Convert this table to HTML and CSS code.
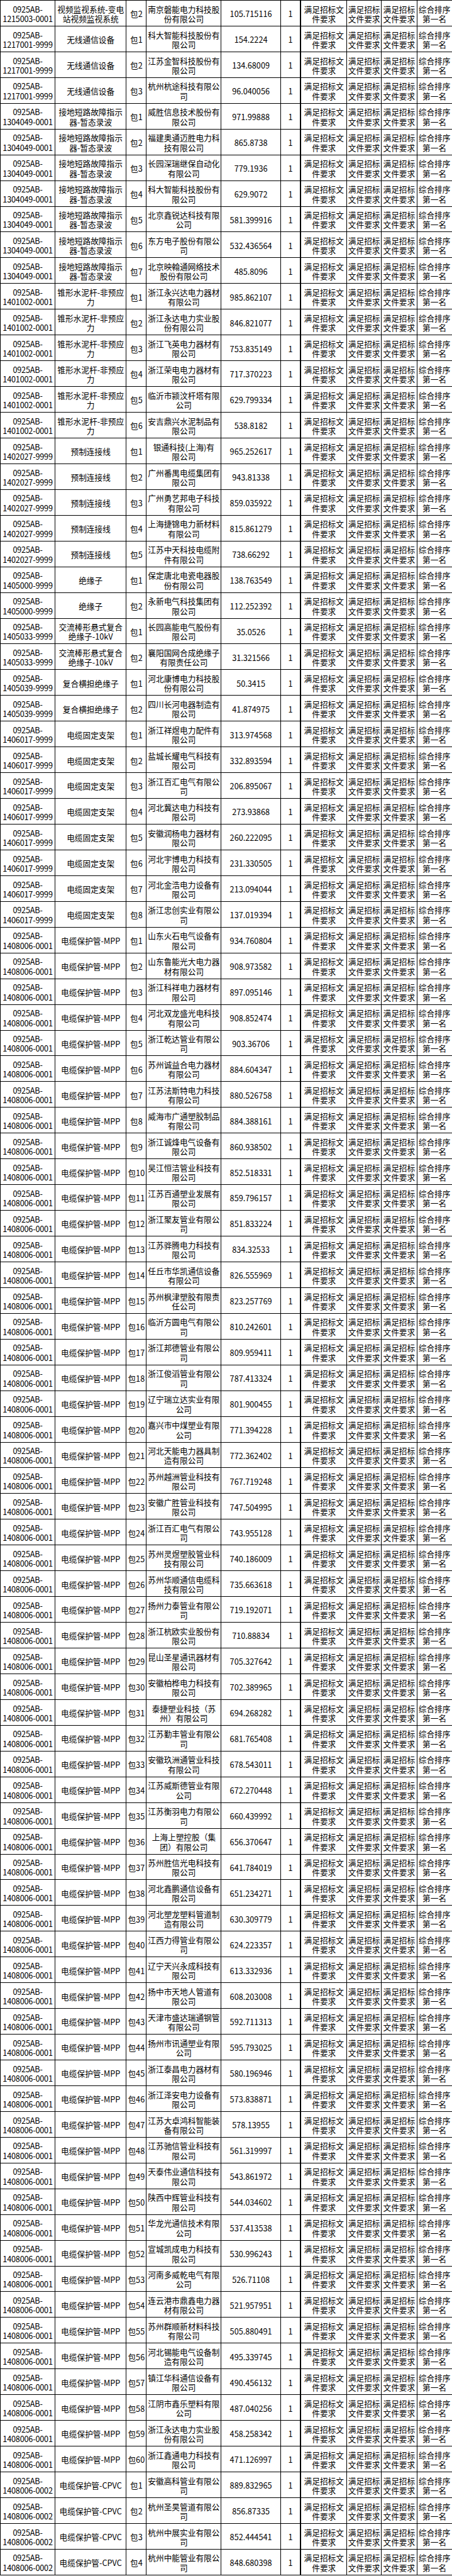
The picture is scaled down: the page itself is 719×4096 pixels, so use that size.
FILE: index.html
```html
<!DOCTYPE html>
<html lang="zh">
<head>
<meta charset="utf-8">
<title>中标候选人</title>
<link rel="stylesheet" href="styles.css">
</head>
<body>
<table class="grid">
<colgroup>
<col class="c-id"><col class="c-name"><col class="c-pkg"><col class="c-co"><col class="c-price"><col class="c-n"><col class="c-r1"><col class="c-r2"><col class="c-r3"><col class="c-rank">
</colgroup>
<tbody>
<tr><td>0925AB-<br>1215003-0001</td><td>视频监视系统-变电<br>站视频监视系统</td><td>包2</td><td>南京磐能电力科技股<br>份有限公司</td><td>105.715116</td><td>1</td><td>满足招标文<br>件要求</td><td>满足招标<br>文件要求</td><td>满足招标<br>文件要求</td><td>综合排序<br>第一名</td></tr>
<tr><td>0925AB-<br>1217001-9999</td><td>无线通信设备</td><td>包1</td><td>科大智能科技股份有<br>限公司</td><td>154.2224</td><td>1</td><td>满足招标文<br>件要求</td><td>满足招标<br>文件要求</td><td>满足招标<br>文件要求</td><td>综合排序<br>第一名</td></tr>
<tr><td>0925AB-<br>1217001-9999</td><td>无线通信设备</td><td>包2</td><td>江苏金智科技股份有<br>限公司</td><td>134.68009</td><td>1</td><td>满足招标文<br>件要求</td><td>满足招标<br>文件要求</td><td>满足招标<br>文件要求</td><td>综合排序<br>第一名</td></tr>
<tr><td>0925AB-<br>1217001-9999</td><td>无线通信设备</td><td>包3</td><td>杭州杭途科技有限公<br>司</td><td>96.040056</td><td>1</td><td>满足招标文<br>件要求</td><td>满足招标<br>文件要求</td><td>满足招标<br>文件要求</td><td>综合排序<br>第一名</td></tr>
<tr><td>0925AB-<br>1304049-0001</td><td>接地短路故障指示<br>器-暂态录波</td><td>包1</td><td>威胜信息技术股份有<br>限公司</td><td>971.99888</td><td>1</td><td>满足招标文<br>件要求</td><td>满足招标<br>文件要求</td><td>满足招标<br>文件要求</td><td>综合排序<br>第一名</td></tr>
<tr><td>0925AB-<br>1304049-0001</td><td>接地短路故障指示<br>器-暂态录波</td><td>包2</td><td>福建奥通迈胜电力科<br>技有限公司</td><td>865.8738</td><td>1</td><td>满足招标文<br>件要求</td><td>满足招标<br>文件要求</td><td>满足招标<br>文件要求</td><td>综合排序<br>第一名</td></tr>
<tr><td>0925AB-<br>1304049-0001</td><td>接地短路故障指示<br>器-暂态录波</td><td>包3</td><td>长园深瑞继保自动化<br>有限公司</td><td>779.1936</td><td>1</td><td>满足招标文<br>件要求</td><td>满足招标<br>文件要求</td><td>满足招标<br>文件要求</td><td>综合排序<br>第一名</td></tr>
<tr><td>0925AB-<br>1304049-0001</td><td>接地短路故障指示<br>器-暂态录波</td><td>包4</td><td>科大智能科技股份有<br>限公司</td><td>629.9072</td><td>1</td><td>满足招标文<br>件要求</td><td>满足招标<br>文件要求</td><td>满足招标<br>文件要求</td><td>综合排序<br>第一名</td></tr>
<tr><td>0925AB-<br>1304049-0001</td><td>接地短路故障指示<br>器-暂态录波</td><td>包5</td><td>北京鑫锐达科技有限<br>公司</td><td>581.399916</td><td>1</td><td>满足招标文<br>件要求</td><td>满足招标<br>文件要求</td><td>满足招标<br>文件要求</td><td>综合排序<br>第一名</td></tr>
<tr><td>0925AB-<br>1304049-0001</td><td>接地短路故障指示<br>器-暂态录波</td><td>包6</td><td>东方电子股份有限公<br>司</td><td>532.436564</td><td>1</td><td>满足招标文<br>件要求</td><td>满足招标<br>文件要求</td><td>满足招标<br>文件要求</td><td>综合排序<br>第一名</td></tr>
<tr><td>0925AB-<br>1304049-0001</td><td>接地短路故障指示<br>器-暂态录波</td><td>包7</td><td>北京映翰通网络技术<br>股份有限公司</td><td>485.8096</td><td>1</td><td>满足招标文<br>件要求</td><td>满足招标<br>文件要求</td><td>满足招标<br>文件要求</td><td>综合排序<br>第一名</td></tr>
<tr><td>0925AB-<br>1401002-0001</td><td>锥形水泥杆-非预应<br>力</td><td>包1</td><td>浙江永兴达电力器材<br>有限公司</td><td>985.862107</td><td>1</td><td>满足招标文<br>件要求</td><td>满足招标<br>文件要求</td><td>满足招标<br>文件要求</td><td>综合排序<br>第一名</td></tr>
<tr><td>0925AB-<br>1401002-0001</td><td>锥形水泥杆-非预应<br>力</td><td>包2</td><td>浙江永达电力实业股<br>份有限公司</td><td>846.821077</td><td>1</td><td>满足招标文<br>件要求</td><td>满足招标<br>文件要求</td><td>满足招标<br>文件要求</td><td>综合排序<br>第一名</td></tr>
<tr><td>0925AB-<br>1401002-0001</td><td>锥形水泥杆-非预应<br>力</td><td>包3</td><td>浙江飞英电力器材有<br>限公司</td><td>753.835149</td><td>1</td><td>满足招标文<br>件要求</td><td>满足招标<br>文件要求</td><td>满足招标<br>文件要求</td><td>综合排序<br>第一名</td></tr>
<tr><td>0925AB-<br>1401002-0001</td><td>锥形水泥杆-非预应<br>力</td><td>包4</td><td>浙江荣电电力器材有<br>限公司</td><td>717.370223</td><td>1</td><td>满足招标文<br>件要求</td><td>满足招标<br>文件要求</td><td>满足招标<br>文件要求</td><td>综合排序<br>第一名</td></tr>
<tr><td>0925AB-<br>1401002-0001</td><td>锥形水泥杆-非预应<br>力</td><td>包5</td><td>临沂市颍汶杆塔有限<br>公司</td><td>629.799334</td><td>1</td><td>满足招标文<br>件要求</td><td>满足招标<br>文件要求</td><td>满足招标<br>文件要求</td><td>综合排序<br>第一名</td></tr>
<tr><td>0925AB-<br>1401002-0001</td><td>锥形水泥杆-非预应<br>力</td><td>包6</td><td>安吉鼎兴水泥制品有<br>限公司</td><td>538.8182</td><td>1</td><td>满足招标文<br>件要求</td><td>满足招标<br>文件要求</td><td>满足招标<br>文件要求</td><td>综合排序<br>第一名</td></tr>
<tr><td>0925AB-<br>1402027-9999</td><td>预制连接线</td><td>包1</td><td>银通科技(上海)有<br>限公司</td><td>965.252617</td><td>1</td><td>满足招标文<br>件要求</td><td>满足招标<br>文件要求</td><td>满足招标<br>文件要求</td><td>综合排序<br>第一名</td></tr>
<tr><td>0925AB-<br>1402027-9999</td><td>预制连接线</td><td>包2</td><td>广州番禺电缆集团有<br>限公司</td><td>943.81338</td><td>1</td><td>满足招标文<br>件要求</td><td>满足招标<br>文件要求</td><td>满足招标<br>文件要求</td><td>综合排序<br>第一名</td></tr>
<tr><td>0925AB-<br>1402027-9999</td><td>预制连接线</td><td>包3</td><td>广州勇艺邦电子科技<br>有限公司</td><td>859.035922</td><td>1</td><td>满足招标文<br>件要求</td><td>满足招标<br>文件要求</td><td>满足招标<br>文件要求</td><td>综合排序<br>第一名</td></tr>
<tr><td>0925AB-<br>1402027-9999</td><td>预制连接线</td><td>包4</td><td>上海捷锦电力新材料<br>有限公司</td><td>815.861279</td><td>1</td><td>满足招标文<br>件要求</td><td>满足招标<br>文件要求</td><td>满足招标<br>文件要求</td><td>综合排序<br>第一名</td></tr>
<tr><td>0925AB-<br>1402027-9999</td><td>预制连接线</td><td>包5</td><td>江苏中天科技电缆附<br>件有限公司</td><td>738.66292</td><td>1</td><td>满足招标文<br>件要求</td><td>满足招标<br>文件要求</td><td>满足招标<br>文件要求</td><td>综合排序<br>第一名</td></tr>
<tr><td>0925AB-<br>1405000-9999</td><td>绝缘子</td><td>包1</td><td>保定唐北电瓷电器股<br>份有限公司</td><td>138.763549</td><td>1</td><td>满足招标文<br>件要求</td><td>满足招标<br>文件要求</td><td>满足招标<br>文件要求</td><td>综合排序<br>第一名</td></tr>
<tr><td>0925AB-<br>1405000-9999</td><td>绝缘子</td><td>包2</td><td>永新电气科技集团有<br>限公司</td><td>112.252392</td><td>1</td><td>满足招标文<br>件要求</td><td>满足招标<br>文件要求</td><td>满足招标<br>文件要求</td><td>综合排序<br>第一名</td></tr>
<tr><td>0925AB-<br>1405033-9999</td><td>交流棒形悬式复合<br>绝缘子-10kV</td><td>包1</td><td>长园高能电气股份有<br>限公司</td><td>35.0526</td><td>1</td><td>满足招标文<br>件要求</td><td>满足招标<br>文件要求</td><td>满足招标<br>文件要求</td><td>综合排序<br>第一名</td></tr>
<tr><td>0925AB-<br>1405033-9999</td><td>交流棒形悬式复合<br>绝缘子-10kV</td><td>包2</td><td>襄阳国网合成绝缘子<br>有限责任公司</td><td>31.321566</td><td>1</td><td>满足招标文<br>件要求</td><td>满足招标<br>文件要求</td><td>满足招标<br>文件要求</td><td>综合排序<br>第一名</td></tr>
<tr><td>0925AB-<br>1405039-9999</td><td>复合横担绝缘子</td><td>包1</td><td>河北康博电力科技股<br>份有限公司</td><td>50.3415</td><td>1</td><td>满足招标文<br>件要求</td><td>满足招标<br>文件要求</td><td>满足招标<br>文件要求</td><td>综合排序<br>第一名</td></tr>
<tr><td>0925AB-<br>1405039-9999</td><td>复合横担绝缘子</td><td>包2</td><td>四川长河电器制造有<br>限公司</td><td>41.874975</td><td>1</td><td>满足招标文<br>件要求</td><td>满足招标<br>文件要求</td><td>满足招标<br>文件要求</td><td>综合排序<br>第一名</td></tr>
<tr><td>0925AB-<br>1406017-9999</td><td>电缆固定支架</td><td>包1</td><td>浙江祥煜电力配件有<br>限公司</td><td>313.974568</td><td>1</td><td>满足招标文<br>件要求</td><td>满足招标<br>文件要求</td><td>满足招标<br>文件要求</td><td>综合排序<br>第一名</td></tr>
<tr><td>0925AB-<br>1406017-9999</td><td>电缆固定支架</td><td>包2</td><td>盐城长耀电气科技有<br>限公司</td><td>332.893594</td><td>1</td><td>满足招标文<br>件要求</td><td>满足招标<br>文件要求</td><td>满足招标<br>文件要求</td><td>综合排序<br>第一名</td></tr>
<tr><td>0925AB-<br>1406017-9999</td><td>电缆固定支架</td><td>包3</td><td>浙江百汇电气有限公<br>司</td><td>206.895067</td><td>1</td><td>满足招标文<br>件要求</td><td>满足招标<br>文件要求</td><td>满足招标<br>文件要求</td><td>综合排序<br>第一名</td></tr>
<tr><td>0925AB-<br>1406017-9999</td><td>电缆固定支架</td><td>包4</td><td>河北冀达电力科技有<br>限公司</td><td>273.93868</td><td>1</td><td>满足招标文<br>件要求</td><td>满足招标<br>文件要求</td><td>满足招标<br>文件要求</td><td>综合排序<br>第一名</td></tr>
<tr><td>0925AB-<br>1406017-9999</td><td>电缆固定支架</td><td>包5</td><td>安徽润杨电力器材有<br>限公司</td><td>260.222095</td><td>1</td><td>满足招标文<br>件要求</td><td>满足招标<br>文件要求</td><td>满足招标<br>文件要求</td><td>综合排序<br>第一名</td></tr>
<tr><td>0925AB-<br>1406017-9999</td><td>电缆固定支架</td><td>包6</td><td>河北宇博电力科技有<br>限公司</td><td>231.330505</td><td>1</td><td>满足招标文<br>件要求</td><td>满足招标<br>文件要求</td><td>满足招标<br>文件要求</td><td>综合排序<br>第一名</td></tr>
<tr><td>0925AB-<br>1406017-9999</td><td>电缆固定支架</td><td>包7</td><td>河北金浩电力设备有<br>限公司</td><td>213.094044</td><td>1</td><td>满足招标文<br>件要求</td><td>满足招标<br>文件要求</td><td>满足招标<br>文件要求</td><td>综合排序<br>第一名</td></tr>
<tr><td>0925AB-<br>1406017-9999</td><td>电缆固定支架</td><td>包8</td><td>浙江忠创实业有限公<br>司</td><td>137.019394</td><td>1</td><td>满足招标文<br>件要求</td><td>满足招标<br>文件要求</td><td>满足招标<br>文件要求</td><td>综合排序<br>第一名</td></tr>
<tr><td>0925AB-<br>1408006-0001</td><td>电缆保护管-MPP</td><td>包1</td><td>山东火石电气设备有<br>限公司</td><td>934.760804</td><td>1</td><td>满足招标文<br>件要求</td><td>满足招标<br>文件要求</td><td>满足招标<br>文件要求</td><td>综合排序<br>第一名</td></tr>
<tr><td>0925AB-<br>1408006-0001</td><td>电缆保护管-MPP</td><td>包2</td><td>山东鲁能光大电力器<br>材有限公司</td><td>908.973582</td><td>1</td><td>满足招标文<br>件要求</td><td>满足招标<br>文件要求</td><td>满足招标<br>文件要求</td><td>综合排序<br>第一名</td></tr>
<tr><td>0925AB-<br>1408006-0001</td><td>电缆保护管-MPP</td><td>包3</td><td>浙江科祥电力器材有<br>限公司</td><td>897.095146</td><td>1</td><td>满足招标文<br>件要求</td><td>满足招标<br>文件要求</td><td>满足招标<br>文件要求</td><td>综合排序<br>第一名</td></tr>
<tr><td>0925AB-<br>1408006-0001</td><td>电缆保护管-MPP</td><td>包4</td><td>河北双龙盛光电科技<br>有限公司</td><td>908.852474</td><td>1</td><td>满足招标文<br>件要求</td><td>满足招标<br>文件要求</td><td>满足招标<br>文件要求</td><td>综合排序<br>第一名</td></tr>
<tr><td>0925AB-<br>1408006-0001</td><td>电缆保护管-MPP</td><td>包5</td><td>浙江乾达管业有限公<br>司</td><td>903.36706</td><td>1</td><td>满足招标文<br>件要求</td><td>满足招标<br>文件要求</td><td>满足招标<br>文件要求</td><td>综合排序<br>第一名</td></tr>
<tr><td>0925AB-<br>1408006-0001</td><td>电缆保护管-MPP</td><td>包6</td><td>苏州诚益合电力器材<br>有限公司</td><td>884.604347</td><td>1</td><td>满足招标文<br>件要求</td><td>满足招标<br>文件要求</td><td>满足招标<br>文件要求</td><td>综合排序<br>第一名</td></tr>
<tr><td>0925AB-<br>1408006-0001</td><td>电缆保护管-MPP</td><td>包7</td><td>江苏法斯特电力科技<br>有限公司</td><td>880.526758</td><td>1</td><td>满足招标文<br>件要求</td><td>满足招标<br>文件要求</td><td>满足招标<br>文件要求</td><td>综合排序<br>第一名</td></tr>
<tr><td>0925AB-<br>1408006-0001</td><td>电缆保护管-MPP</td><td>包8</td><td>威海市广通塑胶制品<br>有限公司</td><td>884.388161</td><td>1</td><td>满足招标文<br>件要求</td><td>满足招标<br>文件要求</td><td>满足招标<br>文件要求</td><td>综合排序<br>第一名</td></tr>
<tr><td>0925AB-<br>1408006-0001</td><td>电缆保护管-MPP</td><td>包9</td><td>浙江诚烽电气设备有<br>限公司</td><td>860.938502</td><td>1</td><td>满足招标文<br>件要求</td><td>满足招标<br>文件要求</td><td>满足招标<br>文件要求</td><td>综合排序<br>第一名</td></tr>
<tr><td>0925AB-<br>1408006-0001</td><td>电缆保护管-MPP</td><td>包10</td><td>吴江恒洁管业科技有<br>限公司</td><td>852.518331</td><td>1</td><td>满足招标文<br>件要求</td><td>满足招标<br>文件要求</td><td>满足招标<br>文件要求</td><td>综合排序<br>第一名</td></tr>
<tr><td>0925AB-<br>1408006-0001</td><td>电缆保护管-MPP</td><td>包11</td><td>江苏百通塑业发展有<br>限公司</td><td>859.796157</td><td>1</td><td>满足招标文<br>件要求</td><td>满足招标<br>文件要求</td><td>满足招标<br>文件要求</td><td>综合排序<br>第一名</td></tr>
<tr><td>0925AB-<br>1408006-0001</td><td>电缆保护管-MPP</td><td>包12</td><td>浙江聚友管业有限公<br>司</td><td>851.833224</td><td>1</td><td>满足招标文<br>件要求</td><td>满足招标<br>文件要求</td><td>满足招标<br>文件要求</td><td>综合排序<br>第一名</td></tr>
<tr><td>0925AB-<br>1408006-0001</td><td>电缆保护管-MPP</td><td>包13</td><td>江苏骅腾电力科技有<br>限公司</td><td>834.32533</td><td>1</td><td>满足招标文<br>件要求</td><td>满足招标<br>文件要求</td><td>满足招标<br>文件要求</td><td>综合排序<br>第一名</td></tr>
<tr><td>0925AB-<br>1408006-0001</td><td>电缆保护管-MPP</td><td>包14</td><td>任丘市华凯通信设备<br>有限公司</td><td>826.555969</td><td>1</td><td>满足招标文<br>件要求</td><td>满足招标<br>文件要求</td><td>满足招标<br>文件要求</td><td>综合排序<br>第一名</td></tr>
<tr><td>0925AB-<br>1408006-0001</td><td>电缆保护管-MPP</td><td>包15</td><td>苏州枫津塑胶有限责<br>任公司</td><td>823.257769</td><td>1</td><td>满足招标文<br>件要求</td><td>满足招标<br>文件要求</td><td>满足招标<br>文件要求</td><td>综合排序<br>第一名</td></tr>
<tr><td>0925AB-<br>1408006-0001</td><td>电缆保护管-MPP</td><td>包16</td><td>临沂方圆电气有限公<br>司</td><td>810.242601</td><td>1</td><td>满足招标文<br>件要求</td><td>满足招标<br>文件要求</td><td>满足招标<br>文件要求</td><td>综合排序<br>第一名</td></tr>
<tr><td>0925AB-<br>1408006-0001</td><td>电缆保护管-MPP</td><td>包17</td><td>浙江邦德管业有限公<br>司</td><td>809.959411</td><td>1</td><td>满足招标文<br>件要求</td><td>满足招标<br>文件要求</td><td>满足招标<br>文件要求</td><td>综合排序<br>第一名</td></tr>
<tr><td>0925AB-<br>1408006-0001</td><td>电缆保护管-MPP</td><td>包18</td><td>浙江俊滔管业有限公<br>司</td><td>787.413324</td><td>1</td><td>满足招标文<br>件要求</td><td>满足招标<br>文件要求</td><td>满足招标<br>文件要求</td><td>综合排序<br>第一名</td></tr>
<tr><td>0925AB-<br>1408006-0001</td><td>电缆保护管-MPP</td><td>包19</td><td>辽宁瑞立达实业有限<br>公司</td><td>801.900455</td><td>1</td><td>满足招标文<br>件要求</td><td>满足招标<br>文件要求</td><td>满足招标<br>文件要求</td><td>综合排序<br>第一名</td></tr>
<tr><td>0925AB-<br>1408006-0001</td><td>电缆保护管-MPP</td><td>包20</td><td>嘉兴市中煤塑业有限<br>公司</td><td>771.394228</td><td>1</td><td>满足招标文<br>件要求</td><td>满足招标<br>文件要求</td><td>满足招标<br>文件要求</td><td>综合排序<br>第一名</td></tr>
<tr><td>0925AB-<br>1408006-0001</td><td>电缆保护管-MPP</td><td>包21</td><td>河北天能电力器具制<br>造有限公司</td><td>772.362402</td><td>1</td><td>满足招标文<br>件要求</td><td>满足招标<br>文件要求</td><td>满足招标<br>文件要求</td><td>综合排序<br>第一名</td></tr>
<tr><td>0925AB-<br>1408006-0001</td><td>电缆保护管-MPP</td><td>包22</td><td>苏州越洲管业科技有<br>限公司</td><td>767.719248</td><td>1</td><td>满足招标文<br>件要求</td><td>满足招标<br>文件要求</td><td>满足招标<br>文件要求</td><td>综合排序<br>第一名</td></tr>
<tr><td>0925AB-<br>1408006-0001</td><td>电缆保护管-MPP</td><td>包23</td><td>安徽广胜管业科技有<br>限公司</td><td>747.504995</td><td>1</td><td>满足招标文<br>件要求</td><td>满足招标<br>文件要求</td><td>满足招标<br>文件要求</td><td>综合排序<br>第一名</td></tr>
<tr><td>0925AB-<br>1408006-0001</td><td>电缆保护管-MPP</td><td>包24</td><td>浙江百汇电气有限公<br>司</td><td>743.955128</td><td>1</td><td>满足招标文<br>件要求</td><td>满足招标<br>文件要求</td><td>满足招标<br>文件要求</td><td>综合排序<br>第一名</td></tr>
<tr><td>0925AB-<br>1408006-0001</td><td>电缆保护管-MPP</td><td>包25</td><td>苏州灵煜塑胶管业科<br>技有限公司</td><td>740.186009</td><td>1</td><td>满足招标文<br>件要求</td><td>满足招标<br>文件要求</td><td>满足招标<br>文件要求</td><td>综合排序<br>第一名</td></tr>
<tr><td>0925AB-<br>1408006-0001</td><td>电缆保护管-MPP</td><td>包26</td><td>苏州华顺通信电缆科<br>技有限公司</td><td>735.663618</td><td>1</td><td>满足招标文<br>件要求</td><td>满足招标<br>文件要求</td><td>满足招标<br>文件要求</td><td>综合排序<br>第一名</td></tr>
<tr><td>0925AB-<br>1408006-0001</td><td>电缆保护管-MPP</td><td>包27</td><td>扬州力泰管业有限公<br>司</td><td>719.192071</td><td>1</td><td>满足招标文<br>件要求</td><td>满足招标<br>文件要求</td><td>满足招标<br>文件要求</td><td>综合排序<br>第一名</td></tr>
<tr><td>0925AB-<br>1408006-0001</td><td>电缆保护管-MPP</td><td>包28</td><td>浙江杭欧实业股份有<br>限公司</td><td>710.88834</td><td>1</td><td>满足招标文<br>件要求</td><td>满足招标<br>文件要求</td><td>满足招标<br>文件要求</td><td>综合排序<br>第一名</td></tr>
<tr><td>0925AB-<br>1408006-0001</td><td>电缆保护管-MPP</td><td>包29</td><td>昆山圣星通讯器材有<br>限公司</td><td>705.327642</td><td>1</td><td>满足招标文<br>件要求</td><td>满足招标<br>文件要求</td><td>满足招标<br>文件要求</td><td>综合排序<br>第一名</td></tr>
<tr><td>0925AB-<br>1408006-0001</td><td>电缆保护管-MPP</td><td>包30</td><td>安徽柏桦电力科技有<br>限公司</td><td>702.389965</td><td>1</td><td>满足招标文<br>件要求</td><td>满足招标<br>文件要求</td><td>满足招标<br>文件要求</td><td>综合排序<br>第一名</td></tr>
<tr><td>0925AB-<br>1408006-0001</td><td>电缆保护管-MPP</td><td>包31</td><td>泰捷塑业科技（苏<br>州）有限公司</td><td>694.268282</td><td>1</td><td>满足招标文<br>件要求</td><td>满足招标<br>文件要求</td><td>满足招标<br>文件要求</td><td>综合排序<br>第一名</td></tr>
<tr><td>0925AB-<br>1408006-0001</td><td>电缆保护管-MPP</td><td>包32</td><td>江苏勤丰管业有限公<br>司</td><td>681.765408</td><td>1</td><td>满足招标文<br>件要求</td><td>满足招标<br>文件要求</td><td>满足招标<br>文件要求</td><td>综合排序<br>第一名</td></tr>
<tr><td>0925AB-<br>1408006-0001</td><td>电缆保护管-MPP</td><td>包33</td><td>安徽玖洲通管业科技<br>有限公司</td><td>678.543011</td><td>1</td><td>满足招标文<br>件要求</td><td>满足招标<br>文件要求</td><td>满足招标<br>文件要求</td><td>综合排序<br>第一名</td></tr>
<tr><td>0925AB-<br>1408006-0001</td><td>电缆保护管-MPP</td><td>包34</td><td>江苏威斯德管业有限<br>公司</td><td>672.270448</td><td>1</td><td>满足招标文<br>件要求</td><td>满足招标<br>文件要求</td><td>满足招标<br>文件要求</td><td>综合排序<br>第一名</td></tr>
<tr><td>0925AB-<br>1408006-0001</td><td>电缆保护管-MPP</td><td>包35</td><td>江苏衡羽电力有限公<br>司</td><td>660.439992</td><td>1</td><td>满足招标文<br>件要求</td><td>满足招标<br>文件要求</td><td>满足招标<br>文件要求</td><td>综合排序<br>第一名</td></tr>
<tr><td>0925AB-<br>1408006-0001</td><td>电缆保护管-MPP</td><td>包36</td><td>上海上塑控股（集<br>团）有限公司</td><td>656.370647</td><td>1</td><td>满足招标文<br>件要求</td><td>满足招标<br>文件要求</td><td>满足招标<br>文件要求</td><td>综合排序<br>第一名</td></tr>
<tr><td>0925AB-<br>1408006-0001</td><td>电缆保护管-MPP</td><td>包37</td><td>苏州胜信光电科技有<br>限公司</td><td>641.784019</td><td>1</td><td>满足招标文<br>件要求</td><td>满足招标<br>文件要求</td><td>满足招标<br>文件要求</td><td>综合排序<br>第一名</td></tr>
<tr><td>0925AB-<br>1408006-0001</td><td>电缆保护管-MPP</td><td>包38</td><td>河北鑫鹏通信设备有<br>限公司</td><td>651.234271</td><td>1</td><td>满足招标文<br>件要求</td><td>满足招标<br>文件要求</td><td>满足招标<br>文件要求</td><td>综合排序<br>第一名</td></tr>
<tr><td>0925AB-<br>1408006-0001</td><td>电缆保护管-MPP</td><td>包39</td><td>河北塑龙塑料管道制<br>造有限公司</td><td>630.309779</td><td>1</td><td>满足招标文<br>件要求</td><td>满足招标<br>文件要求</td><td>满足招标<br>文件要求</td><td>综合排序<br>第一名</td></tr>
<tr><td>0925AB-<br>1408006-0001</td><td>电缆保护管-MPP</td><td>包40</td><td>江西力得管业有限公<br>司</td><td>624.223357</td><td>1</td><td>满足招标文<br>件要求</td><td>满足招标<br>文件要求</td><td>满足招标<br>文件要求</td><td>综合排序<br>第一名</td></tr>
<tr><td>0925AB-<br>1408006-0001</td><td>电缆保护管-MPP</td><td>包41</td><td>辽宁天兴永成科技有<br>限公司</td><td>613.332936</td><td>1</td><td>满足招标文<br>件要求</td><td>满足招标<br>文件要求</td><td>满足招标<br>文件要求</td><td>综合排序<br>第一名</td></tr>
<tr><td>0925AB-<br>1408006-0001</td><td>电缆保护管-MPP</td><td>包42</td><td>扬中市天地人管道有<br>限公司</td><td>608.203008</td><td>1</td><td>满足招标文<br>件要求</td><td>满足招标<br>文件要求</td><td>满足招标<br>文件要求</td><td>综合排序<br>第一名</td></tr>
<tr><td>0925AB-<br>1408006-0001</td><td>电缆保护管-MPP</td><td>包43</td><td>天津市盛达瑞通钢管<br>有限公司</td><td>592.711313</td><td>1</td><td>满足招标文<br>件要求</td><td>满足招标<br>文件要求</td><td>满足招标<br>文件要求</td><td>综合排序<br>第一名</td></tr>
<tr><td>0925AB-<br>1408006-0001</td><td>电缆保护管-MPP</td><td>包44</td><td>扬州市讯通塑业有限<br>公司</td><td>595.793025</td><td>1</td><td>满足招标文<br>件要求</td><td>满足招标<br>文件要求</td><td>满足招标<br>文件要求</td><td>综合排序<br>第一名</td></tr>
<tr><td>0925AB-<br>1408006-0001</td><td>电缆保护管-MPP</td><td>包45</td><td>浙江泰昌电力器材有<br>限公司</td><td>580.196946</td><td>1</td><td>满足招标文<br>件要求</td><td>满足招标<br>文件要求</td><td>满足招标<br>文件要求</td><td>综合排序<br>第一名</td></tr>
<tr><td>0925AB-<br>1408006-0001</td><td>电缆保护管-MPP</td><td>包46</td><td>浙江泽安电力设备有<br>限公司</td><td>573.838871</td><td>1</td><td>满足招标文<br>件要求</td><td>满足招标<br>文件要求</td><td>满足招标<br>文件要求</td><td>综合排序<br>第一名</td></tr>
<tr><td>0925AB-<br>1408006-0001</td><td>电缆保护管-MPP</td><td>包47</td><td>江苏大卓鸿科智能装<br>备有限公司</td><td>578.13955</td><td>1</td><td>满足招标文<br>件要求</td><td>满足招标<br>文件要求</td><td>满足招标<br>文件要求</td><td>综合排序<br>第一名</td></tr>
<tr><td>0925AB-<br>1408006-0001</td><td>电缆保护管-MPP</td><td>包48</td><td>江苏驰信管业科技有<br>限公司</td><td>561.319997</td><td>1</td><td>满足招标文<br>件要求</td><td>满足招标<br>文件要求</td><td>满足招标<br>文件要求</td><td>综合排序<br>第一名</td></tr>
<tr><td>0925AB-<br>1408006-0001</td><td>电缆保护管-MPP</td><td>包49</td><td>天泰伟业通信科技有<br>限公司</td><td>543.861972</td><td>1</td><td>满足招标文<br>件要求</td><td>满足招标<br>文件要求</td><td>满足招标<br>文件要求</td><td>综合排序<br>第一名</td></tr>
<tr><td>0925AB-<br>1408006-0001</td><td>电缆保护管-MPP</td><td>包50</td><td>陕西中辉管业科技有<br>限公司</td><td>544.034602</td><td>1</td><td>满足招标文<br>件要求</td><td>满足招标<br>文件要求</td><td>满足招标<br>文件要求</td><td>综合排序<br>第一名</td></tr>
<tr><td>0925AB-<br>1408006-0001</td><td>电缆保护管-MPP</td><td>包51</td><td>华龙光通信技术有限<br>公司</td><td>537.413538</td><td>1</td><td>满足招标文<br>件要求</td><td>满足招标<br>文件要求</td><td>满足招标<br>文件要求</td><td>综合排序<br>第一名</td></tr>
<tr><td>0925AB-<br>1408006-0001</td><td>电缆保护管-MPP</td><td>包52</td><td>宣城凯成电力科技有<br>限公司</td><td>530.996243</td><td>1</td><td>满足招标文<br>件要求</td><td>满足招标<br>文件要求</td><td>满足招标<br>文件要求</td><td>综合排序<br>第一名</td></tr>
<tr><td>0925AB-<br>1408006-0001</td><td>电缆保护管-MPP</td><td>包53</td><td>河南多威乾电气有限<br>公司</td><td>526.71108</td><td>1</td><td>满足招标文<br>件要求</td><td>满足招标<br>文件要求</td><td>满足招标<br>文件要求</td><td>综合排序<br>第一名</td></tr>
<tr><td>0925AB-<br>1408006-0001</td><td>电缆保护管-MPP</td><td>包54</td><td>连云港市鼎鑫电力器<br>材有限公司</td><td>521.957951</td><td>1</td><td>满足招标文<br>件要求</td><td>满足招标<br>文件要求</td><td>满足招标<br>文件要求</td><td>综合排序<br>第一名</td></tr>
<tr><td>0925AB-<br>1408006-0001</td><td>电缆保护管-MPP</td><td>包55</td><td>苏州群顺新材料科技<br>有限公司</td><td>505.880491</td><td>1</td><td>满足招标文<br>件要求</td><td>满足招标<br>文件要求</td><td>满足招标<br>文件要求</td><td>综合排序<br>第一名</td></tr>
<tr><td>0925AB-<br>1408006-0001</td><td>电缆保护管-MPP</td><td>包56</td><td>河北锡能电气设备制<br>造有限公司</td><td>495.339745</td><td>1</td><td>满足招标文<br>件要求</td><td>满足招标<br>文件要求</td><td>满足招标<br>文件要求</td><td>综合排序<br>第一名</td></tr>
<tr><td>0925AB-<br>1408006-0001</td><td>电缆保护管-MPP</td><td>包57</td><td>镇江华科通信设备有<br>限公司</td><td>490.456132</td><td>1</td><td>满足招标文<br>件要求</td><td>满足招标<br>文件要求</td><td>满足招标<br>文件要求</td><td>综合排序<br>第一名</td></tr>
<tr><td>0925AB-<br>1408006-0001</td><td>电缆保护管-MPP</td><td>包58</td><td>江阴市鑫乐塑料有限<br>公司</td><td>487.040256</td><td>1</td><td>满足招标文<br>件要求</td><td>满足招标<br>文件要求</td><td>满足招标<br>文件要求</td><td>综合排序<br>第一名</td></tr>
<tr><td>0925AB-<br>1408006-0001</td><td>电缆保护管-MPP</td><td>包59</td><td>浙江永达电力实业股<br>份有限公司</td><td>458.258342</td><td>1</td><td>满足招标文<br>件要求</td><td>满足招标<br>文件要求</td><td>满足招标<br>文件要求</td><td>综合排序<br>第一名</td></tr>
<tr><td>0925AB-<br>1408006-0001</td><td>电缆保护管-MPP</td><td>包60</td><td>浙江鑫通电力科技有<br>限公司</td><td>471.126997</td><td>1</td><td>满足招标文<br>件要求</td><td>满足招标<br>文件要求</td><td>满足招标<br>文件要求</td><td>综合排序<br>第一名</td></tr>
<tr><td>0925AB-<br>1408006-0002</td><td>电缆保护管-CPVC</td><td>包1</td><td>安徽高科管业有限公<br>司</td><td>889.832965</td><td>1</td><td>满足招标文<br>件要求</td><td>满足招标<br>文件要求</td><td>满足招标<br>文件要求</td><td>综合排序<br>第一名</td></tr>
<tr><td>0925AB-<br>1408006-0002</td><td>电缆保护管-CPVC</td><td>包2</td><td>杭州圣昊管道有限公<br>司</td><td>856.87335</td><td>1</td><td>满足招标文<br>件要求</td><td>满足招标<br>文件要求</td><td>满足招标<br>文件要求</td><td>综合排序<br>第一名</td></tr>
<tr><td>0925AB-<br>1408006-0002</td><td>电缆保护管-CPVC</td><td>包3</td><td>杭州中展实业有限公<br>司</td><td>852.444541</td><td>1</td><td>满足招标文<br>件要求</td><td>满足招标<br>文件要求</td><td>满足招标<br>文件要求</td><td>综合排序<br>第一名</td></tr>
<tr><td>0925AB-<br>1408006-0002</td><td>电缆保护管-CPVC</td><td>包4</td><td>杭州中能管业有限公<br>司</td><td>848.680398</td><td>1</td><td>满足招标文<br>件要求</td><td>满足招标<br>文件要求</td><td>满足招标<br>文件要求</td><td>综合排序<br>第一名</td></tr>
</tbody>
</table>
</body>
</html>
```

FILE: styles.css
```css
html, body {
  margin: 0;
  padding: 0;
  background: #ffffff;
}

.grid {
  border-collapse: collapse;
  table-layout: fixed;
  width: 719px;
  font-family: "Noto Sans CJK SC", "Noto Sans", sans-serif;
  font-size: 12.7px;
  line-height: 15.3px;
  color: #000000;
}

.c-id { width: 87.1px; }
.c-name { width: 113.2px; }
.c-pkg { width: 32.1px; }
.c-co { width: 119px; }
.c-price { width: 94.4px; }
.c-n { width: 32.1px; }
.c-r1 { width: 73.3px; }
.c-r2 { width: 55px; }
.c-r3 { width: 56.4px; }
.c-rank { width: 56.1px; }

.grid tr {
  height: 40.95px;
}

.grid td {
  border: 1px solid #000000;
  padding: 2px 0 0 0;
  text-align: center;
  vertical-align: middle;
  white-space: nowrap;
  overflow: hidden;
}

.grid td:nth-child(7) {
  border-left-width: 2px;
}

.grid td:first-child {
  letter-spacing: -0.2px;
}
```
